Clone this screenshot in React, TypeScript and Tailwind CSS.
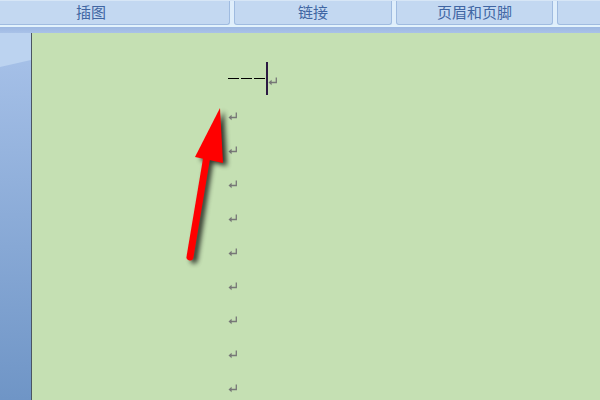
import React from "react";

function ReturnMark() {
  return (
    <svg width="10" height="9" viewBox="0 0 10 9" className="block">
      <path d="M8.3 0.5 V5.5 H2.5" stroke="#777" strokeWidth="1.3" fill="none" />
      <path d="M0.5 5.5 L3.6 2.8 L3.6 8.2 Z" fill="#777" />
    </svg>
  );
}

function Tab({ label, className }: { label: string; className: string }) {
  return (
    <div
      className={`h-[24px] shrink-0 flex items-center justify-center rounded-b-[3px] border border-t-0 border-[#9fbbe0] bg-[#c3d8f1] text-[15px] text-[#4066a3] ${className}`}
      style={{ fontFamily: '"Noto Sans CJK SC", "Noto Sans", sans-serif' }}
    >
      {label}
    </div>
  );
}

export default function App() {
  const marks = Array.from({ length: 9 });
  return (
    <div className="w-[600px] h-[400px] overflow-hidden flex flex-col bg-[#c6dbf2] relative">
      {/* ribbon tabs */}
      <div className="h-[25px] shrink-0 flex gap-[4px] bg-[#dfeefb] border-t border-[#d7e6f6] ml-[-48px]">
        <Tab label="插图" className="w-[278px]" />
        <Tab label="链接" className="w-[158px]" />
        <Tab label="页眉和页脚" className="w-[157px]" />
        <Tab label="" className="w-[60px]" />
      </div>
      <div className="h-[2px] shrink-0 bg-[#e3f3fc]" />
      <div className="h-[6px] shrink-0 bg-gradient-to-b from-[#9db8e2] to-[#a9c2e8]" />
      <div className="flex-1 min-h-0 flex overflow-hidden">
        {/* left margin */}
        <div className="w-[31px] shrink-0 relative overflow-hidden bg-gradient-to-b from-[#a9c3ea] to-[#6f95c6]">
          <div className="absolute left-0 top-0 w-[31px] h-[34px] bg-[#bcd3f0] [clip-path:polygon(0_0,100%_0,100%_27px,0_34px)]" />
        </div>
        <div className="w-px shrink-0 bg-[#4b5563]" />
        {/* page */}
        <div className="flex-1 bg-[#c5e0b3] pl-[196px] flex flex-col">
          <div className="h-[66px] shrink-0 flex items-start pt-[29px]">
            <div className="flex items-start">
              <div className="flex gap-[2px] mt-[16px]">
                <div className="w-[11px] h-[1px] bg-black" />
                <div className="w-[11px] h-[1px] bg-black" />
                <div className="w-[11px] h-[1px] bg-black" />
              </div>
              <div className="w-[2px] h-[33px] bg-[#2b1a42] ml-[1px]" />
              <div className="mt-[15px]">
                <ReturnMark />
              </div>
            </div>
          </div>
          {marks.map((_, i) => (
            <div key={i} className="h-[34px] shrink-0 flex items-center">
              <ReturnMark />
            </div>
          ))}
        </div>
      </div>
      {/* red arrow overlay */}
      <svg
        className="absolute left-0 top-0 pointer-events-none"
        width="600"
        height="400"
        viewBox="0 0 600 400"
      >
        <defs>
          <filter id="sh" x="-50%" y="-50%" width="200%" height="200%">
            <feGaussianBlur stdDeviation="2.5" />
          </filter>
        </defs>
        <g transform="translate(4,3)" filter="url(#sh)" opacity="0.75">
          <line x1="190" y1="257" x2="207" y2="150" stroke="#000" strokeWidth="7" strokeLinecap="round" />
          <polygon points="220,108 196,157 223,163" fill="#000" />
        </g>
        <line x1="190" y1="257" x2="208" y2="150" stroke="#ff0000" strokeWidth="7" strokeLinecap="round" />
        <polygon points="220,108 195,157 223,163" fill="#ff0000" />
      </svg>
    </div>
  );
}
